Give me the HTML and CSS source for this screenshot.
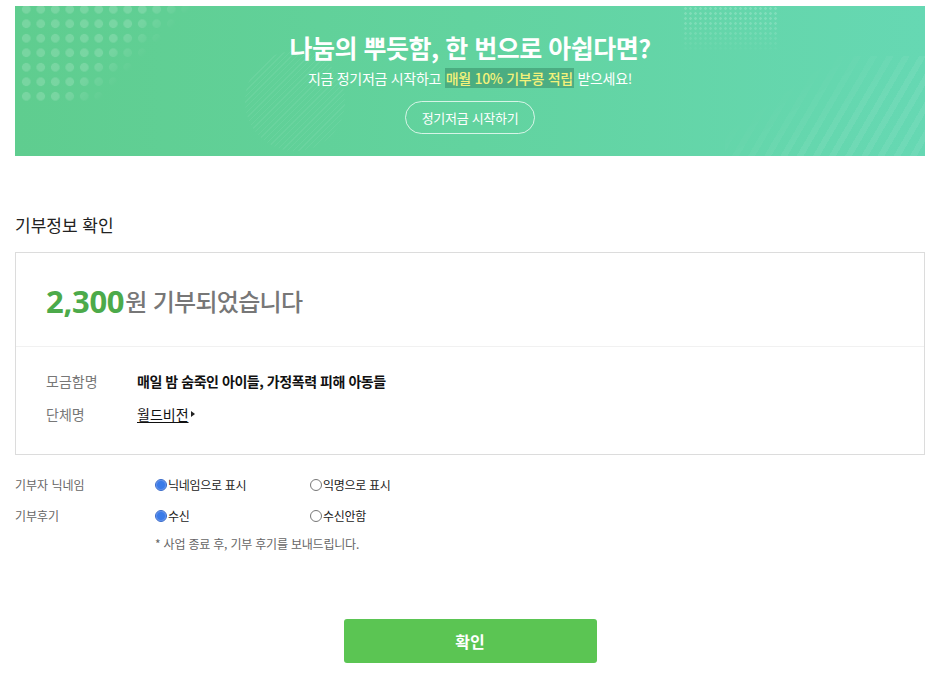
FILE: index.html
```html
<!DOCTYPE html>
<html lang="ko">
<head>
<meta charset="utf-8">
<link rel="stylesheet" href="styles.css">
</head>
<body>
<div class="page">
  <div class="banner">
    <div class="dots"></div>
    <div class="dots-small"></div>
    <div class="stripes"></div>
    <div class="ring"></div>
    <h2 class="banner-title">나눔의 뿌듯함, 한 번으로 아쉽다면?</h2>
    <p class="banner-sub">지금 정기저금 시작하고 <span class="hl">매월 10% 기부콩 적립</span> 받으세요!</p>
    <a class="banner-btn">정기저금 시작하기</a>
  </div>

  <h3 class="section-title">기부정보 확인</h3>

  <div class="info-box">
    <div class="amount-row">
      <span class="amount">2,300</span><span class="amount-text">원 기부되었습니다</span>
    </div>
    <div class="details">
      <div class="detail-row">
        <span class="detail-label">모금함명</span>
        <span class="detail-value">매일 밤 숨죽인 아이들, 가정폭력 피해 아동들</span>
      </div>
      <div class="detail-row">
        <span class="detail-label">단체명</span>
        <span class="detail-link"><u>월드비전</u><span class="tri"></span></span>
      </div>
    </div>
  </div>

  <div class="form">
    <div class="form-row">
      <span class="form-label">기부자 닉네임</span>
      <span class="option"><span class="radio on"></span>닉네임으로 표시</span>
      <span class="option"><span class="radio"></span>익명으로 표시</span>
    </div>
    <div class="form-row">
      <span class="form-label">기부후기</span>
      <span class="option"><span class="radio on"></span>수신</span>
      <span class="option"><span class="radio"></span>수신안함</span>
    </div>
    <p class="note">* 사업 종료 후, 기부 후기를 보내드립니다.</p>
  </div>

  <div class="actions">
    <button class="confirm">확인</button>
  </div>
</div>
</body>
</html>
```

FILE: styles.css
```css
* { box-sizing: border-box; }
html, body { margin: 0; padding: 0; background: #fff; }
body {
  font-family: "Noto Sans CJK KR", "Noto Sans", sans-serif;
  color: #222;
}
.page {
  width: 910px;
  margin: 0 0 0 15px;
  padding-top: 6px;
}
.banner {
  position: relative;
  overflow: hidden;
  height: 150px;
  background: linear-gradient(90deg, #5fcd8f 0%, #62d39f 50%, #66d8b3 100%);
  display: flex;
  flex-direction: column;
  align-items: center;
  padding-top: 26px;
}
.dots {
  position: absolute;
  left: 4px; top: 0;
  width: 175px; height: 100px;
  background-image: radial-gradient(circle, rgba(255,255,255,0.16) 4px, transparent 4.6px);
  background-size: 14.5px 14.5px;
  background-position: 0 -4px;
  -webkit-mask-image: linear-gradient(135deg, #000 48%, transparent 64%);
  mask-image: linear-gradient(135deg, #000 48%, transparent 64%);
}
.dots-small {
  position: absolute;
  left: 668px; top: 0;
  width: 95px; height: 48px;
  background-image: radial-gradient(circle, rgba(255,255,255,0.18) 1px, transparent 1.6px);
  background-size: 5px 5px;
  -webkit-mask-image: linear-gradient(180deg, #000 30%, transparent 100%);
  mask-image: linear-gradient(180deg, #000 30%, transparent 100%);
}
.stripes {
  position: absolute;
  right: 0; bottom: 0;
  width: 200px; height: 100px;
  background-image: repeating-linear-gradient(120deg, rgba(255,255,255,0.07) 0 6px, transparent 6px 14px);
  -webkit-mask-image: linear-gradient(145deg, transparent 30%, #000 65%);
  mask-image: linear-gradient(145deg, transparent 30%, #000 65%);
}
.ring {
  position: absolute;
  left: 230px; top: 45px;
  width: 100px; height: 100px;
  border-radius: 50%;
  background-image: repeating-linear-gradient(135deg, rgba(255,255,255,0.06) 0 1px, transparent 1px 4px);
}
.banner-title {
  position: relative;
  margin: 0;
  font-size: 25px;
  line-height: 30px;
  font-weight: 700;
  color: #fff;
  letter-spacing: -0.5px;
}
.banner-sub {
  position: relative;
  margin: 6px 0 0;
  font-size: 14px;
  line-height: 20px;
  color: #fff;
  letter-spacing: -0.3px;
}
.hl {
  color: #f3f27a;
  background: rgba(40, 110, 80, 0.38);
  font-weight: 500;
  padding: 0 1px;
}
.banner-btn {
  position: relative;
  margin-top: 13px;
  width: 130px;
  height: 33px;
  border: 1px solid rgba(255,255,255,0.75);
  border-radius: 17px;
  display: flex;
  align-items: center;
  justify-content: center;
  color: #fff;
  font-size: 13px;
  letter-spacing: -0.3px;
}
.section-title {
  margin: 57px 0 0;
  font-size: 17px;
  line-height: 24px;
  font-weight: 400;
  color: #222;
}
.info-box {
  margin-top: 15px;
  border: 1px solid #dcdcdc;
}
.amount-row {
  height: 94px;
  display: flex;
  align-items: center;
  padding-left: 30px;
  padding-top: 2px;
  border-bottom: 1px solid #f1f1f1;
}
.amount {
  font-size: 31px;
  font-weight: 700;
  color: #4caa4a;
  letter-spacing: -0.3px;
  font-family: "Noto Sans", "Noto Sans CJK KR", sans-serif;
}
.amount-text {
  font-size: 24px;
  font-weight: 500;
  color: #777;
  margin-left: 1px;
  letter-spacing: -0.7px;
}
.details {
  padding: 17px 30px 24px;
}
.detail-row {
  display: flex;
  align-items: center;
  height: 33px;
  font-size: 14px;
}
.detail-label {
  width: 91px;
  color: #777;
}
.detail-value {
  font-weight: 700;
  color: #111;
  letter-spacing: -0.45px;
}
.detail-link {
  color: #111;
  display: flex;
  align-items: center;
}
.detail-link u { text-underline-offset: 2px; }
.tri {
  width: 0; height: 0;
  border-left: 4px solid #222;
  border-top: 3px solid transparent;
  border-bottom: 3px solid transparent;
  margin-left: 2px;
}
.form {
  margin-top: 14px;
}
.form-row {
  display: flex;
  align-items: center;
  height: 31px;
  font-size: 12px;
}
.form-label {
  width: 140px;
  color: #666;
}
.option {
  width: 155px;
  display: flex;
  align-items: center;
  color: #222;
  letter-spacing: -0.3px;
}
.radio {
  width: 12px;
  height: 12px;
  border-radius: 50%;
  border: 1px solid #777;
  background: #fff;
  margin-right: 1px;
}
.radio.on {
  border: 1px solid #3467c8;
  background: radial-gradient(circle, #3b7be8 3.5px, #5d90ee 4.5px, #a9c3f3 5.5px);
}
.note {
  margin: 4px 0 0 140px;
  font-size: 12px;
  line-height: 18px;
  color: #666;
  letter-spacing: -0.2px;
}
.actions {
  display: flex;
  justify-content: center;
  margin-top: 66px;
}
.confirm {
  width: 253px;
  height: 44px;
  border: none;
  border-radius: 3px;
  background: #5bc553;
  color: #fff;
  font-family: "Noto Sans CJK KR", sans-serif;
  font-size: 16px;
  font-weight: 700;
}
```
